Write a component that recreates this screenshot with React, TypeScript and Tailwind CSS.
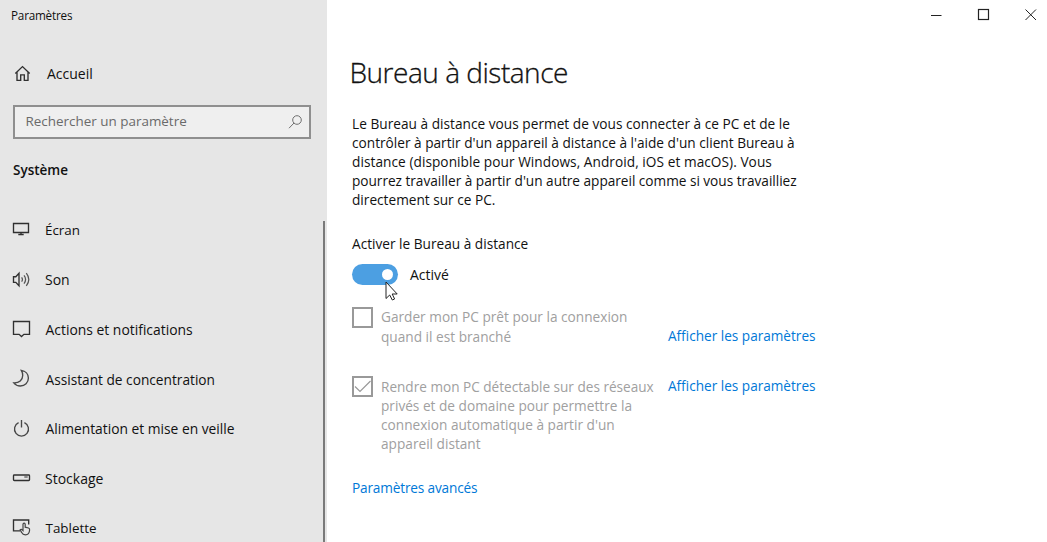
import type { ReactNode } from "react";

function Icon({ children }: { children: ReactNode }) {
  return (
    <svg width="20" height="20" viewBox="0 0 20 20" fill="none" stroke="#303030" strokeWidth="1.35" className="shrink-0">
      {children}
    </svg>
  );
}

const items: { label: string; text: string; icon: ReactNode }[] = [
  {
    label: "Écran",
    text: "pl-[13px] text-[13.4px]",
    icon: (
      <>
        <path d="M1.5 4.5h15v9h-15z" />
        <path d="M9 13.5v2M6.3 15.5h5.4" />
      </>
    ),
  },
  {
    label: "Son",
    text: "pl-[13px] text-[14px]",
    icon: (
      <>
        <path d="M1.5 7.7h2.3l3.2-3.4v12.4l-3.2-3.4H1.5z" />
        <path d="M9.6 8.3q1.7 2.2 0 4.4M12 6.4q3.2 4.1 0 8.2M14.3 4.2q5 6.3 0 12.6" stroke="#555" strokeWidth="1.25" />
      </>
    ),
  },
  {
    label: "Actions et notifications",
    text: "pl-[13.5px] text-[13.9px]",
    icon: <path d="M1.5 2.5h16v12.8h-5.6L9.5 17.5l-2.4-2.2H1.5z" />,
  },
  {
    label: "Assistant de concentration",
    text: "pl-[13.5px] text-[13.7px]",
    icon: <path d="M9.3 2.4c4.2.6 7.1 3.7 7.1 7.7 0 4.5-3.5 7.900-8 7.900-2.800 0-5-1.100-6.600-3.200 5.300.3 8.900-2.900 8.900-7.300 0-1.900-.5-3.700-1.400-5.100z" stroke="#484848" />,
  },
  {
    label: "Alimentation et mise en veille",
    text: "pl-[13.5px] text-[13.8px]",
    icon: <path d="M9.500 2v7.500M6.600 4.700a7 7 0 1 0 5.800 0" stroke="#484848" />,
  },
  {
    label: "Stockage",
    text: "pl-[13px] text-[14px]",
    icon: (
      <>
        <rect x="1.5" y="7" width="16" height="5.5" rx=".8" />
        <path d="M12.3 9h3.4" strokeWidth="1" />
      </>
    ),
  },
  {
    label: "Tablette",
    text: "pl-[13.5px] text-[13.4px]",
    icon: (
      <>
        <path d="M8 13.8H1.5V3h15.2V7.500" />
        <path d="M11 13.500V7q1.100-1.700 2.200 0v3.200l3.300.8q1.400.5 1.100 2-.2 4.800-4.200 4.800-2.600 0-3.700-2.200l-1.600-2.800q1.100-1.300 2.900.7z" stroke="#444" strokeWidth="1.200" />
      </>
    ),
  },
];

function Line({ className = "", children }: { className?: string; children: ReactNode }) {
  return <span className={`block whitespace-nowrap ${className}`}>{children}</span>;
}

export default function App() {
  return (
    <div className="flex h-[542px] w-[1047px] overflow-hidden bg-white font-['Open_Sans',sans-serif] text-[13.67px] leading-[19.1px] text-[#111]">
      <aside className="flex w-[327px] shrink-0 flex-col bg-[#e6e6e6]">
        <div className="pl-[11px] pt-[5px] text-[11.7px] leading-[20px] tracking-[-0.2px]">Paramètres</div>
        <div className="mt-[38px] flex h-[22px] items-center pl-[13px]">
          <Icon>
            <path d="M2.300 9.400 9.500 2.600l7.200 6.800M4 7.900v8.400h3.700v-5.400h3.600v5.400H15V7.900" />
          </Icon>
          <span className="pl-[14px] text-[14px]">Accueil</span>
        </div>
        <div className="ml-[13px] mt-[20px] flex h-[34px] w-[298px] items-center justify-between border-2 border-[#8f8f8f] bg-[#efefef] pl-[10.5px] pr-[6px]">
          <span className="text-[13.45px] text-[#6a6a6a]">Rechercher un paramètre</span>
          <svg width="16" height="16" viewBox="0 0 16 16" fill="none" stroke="#707070" strokeWidth="1">
            <circle cx="10" cy="6" r="4.300" />
            <path d="M7 9 2 14.200" />
          </svg>
        </div>
        <div className="mt-[21px] pl-[13px] text-[13.5px] font-semibold leading-[20px]">Système</div>
        <div className="mt-[25px] flex min-h-0 flex-1 justify-between">
          <nav className="flex flex-col pt-[0.4px]">
            {items.map(({ label, text, icon }) => (
              <a key={label} className="flex h-[49.67px] shrink-0 items-center pl-[12px]">
                <span className="-mt-[2px]">
                  <Icon>{icon}</Icon>
                </span>
                <span className={text}>{label}</span>
              </a>
            ))}
          </nav>
          <div className="mr-[2px] mt-[16px] w-[2px] bg-[#7a7a7a]" />
        </div>
      </aside>

      <main className="flex flex-1 flex-col">
        <div className="flex h-[30px] justify-end gap-[27px] pr-[6px] pt-[5px]">
          <svg width="20" height="20" viewBox="0 0 20 20" stroke="#222">
            <path d="M4 10.500h10.500" />
          </svg>
          <svg width="20" height="20" viewBox="0 0 20 20" fill="none" stroke="#222" strokeWidth="1.200">
            <rect x="4.500" y="4.500" width="10" height="10" />
          </svg>
          <svg width="20" height="20" viewBox="0 0 20 20" stroke="#222">
            <path d="m4.500 4.500 10.500 10.500M15 4.500 4.500 15" />
          </svg>
        </div>
        <div className="pl-[25px]">
          <h1 className="-ml-[2.5px] mt-[22px] text-[28px] font-light leading-[40px] tracking-[-0.48px] [-webkit-text-stroke:0.3px_#111]">Bureau à distance</h1>
          <p className="mt-[21.5px]">
            <Line className="tracking-[0.020px]">Le Bureau à distance vous permet de vous connecter à ce PC et de le</Line>
            <Line>contrôler à partir d'un appareil à distance à l'aide d'un client Bureau à</Line>
            <Line className="tracking-[0.055px]">distance (disponible pour Windows, Android, iOS et macOS). Vous</Line>
            <Line className="tracking-[-0.030px]">pourrez travailler à partir d'un autre appareil comme si vous travailliez</Line>
            <Line>directement sur ce PC.</Line>
          </p>
          <div className="mt-[25px]">Activer le Bureau à distance</div>
          <div className="mt-[10.4px] flex h-[22px] items-center">
            <div className="relative flex h-[21px] w-[46px] items-center justify-end rounded-full bg-[#4c9fe2] pr-[5px]">
              <div className="size-[11px] rounded-full bg-white" />
              <svg className="absolute left-[33px] top-[17px]" width="14" height="22" viewBox="0 0 14 22" fill="#fff" stroke="#222" strokeWidth="1">
                <path d="M1 1v16.500l3.700-3.500 2.600 5 2.300-1-2.400-5h5z" />
              </svg>
            </div>
            <span className="pl-[12px] text-[14px]">Activé</span>
          </div>
          <div className="mt-[21.5px] flex text-[#a0a0a0]">
            <div className="size-[21px] shrink-0 border-2 border-[#999]" />
            <div className="w-[295px] pl-[8px] pt-[0.5px]">
              <Line>Garder mon PC prêt pour la connexion</Line>
              <Line>quand il est branché</Line>
            </div>
            <a className="mt-[19px] text-[13.6px] text-[#0078d7]">Afficher les paramètres</a>
          </div>
          <div className="mt-[30.3px] flex text-[#a0a0a0]">
            <div className="size-[21px] shrink-0 border-2 border-[#999]">
              <svg width="17" height="17" viewBox="0 0 17 17" fill="none" stroke="#999" strokeWidth="1.200">
                <path d="m1 8.500 5 5L16.500 3" />
              </svg>
            </div>
            <div className="w-[295px] pl-[8px] pt-[0.9px]">
              <Line className="text-[13.6px]">Rendre mon PC détectable sur des réseaux</Line>
              <Line>privés et de domaine pour permettre la</Line>
              <Line>connexion automatique à partir d'un</Line>
              <Line>appareil distant</Line>
            </div>
            <a className="text-[13.6px] text-[#0078d7]">Afficher les paramètres</a>
          </div>
          <a className="mt-[24.6px] block tracking-[-0.18px] text-[#0078d7]">Paramètres avancés</a>
        </div>
      </main>
    </div>
  );
}
